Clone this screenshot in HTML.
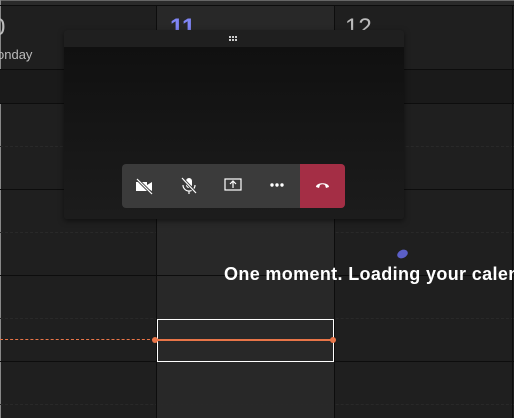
<!DOCTYPE html>
<html><head><style>
body{margin:0;width:514px;height:418px;overflow:hidden;background:#1f1f1f;font-family:"Liberation Sans",sans-serif;position:relative}
.a{position:absolute}
.h{position:absolute;left:0;width:514px;height:1px;background:#0d0d0d}
.d{position:absolute;left:0;width:514px;height:0;border-top:1px dashed #292929}
.v{position:absolute;top:5px;width:1px;height:413px;background:#0d0d0d}
</style></head><body>
<div class="a" style="left:0;top:0;width:514px;height:5px;background:#2a2a2a;border-top:1px solid #666;box-sizing:border-box"></div>
<div class="a" style="left:0;top:0;width:1px;height:418px;background:#888"></div>
<div class="a" style="left:157px;top:5px;width:177px;height:413px;background:#282828"></div>
<div class="a" style="left:0;top:70px;width:514px;height:33px;background:#1a1a1a"></div>
<div class="a" style="left:157px;top:70px;width:177px;height:33px;background:#1c1c1c"></div>
<div class="h" style="top:5px"></div>
<div class="h" style="top:69px"></div>
<div class="h" style="top:103px"></div>
<div class="d" style="top:146px"></div>
<div class="h" style="top:189px"></div>
<div class="d" style="top:232px"></div>
<div class="h" style="top:275px"></div>
<div class="d" style="top:318px"></div>
<div class="h" style="top:361px"></div>
<div class="d" style="top:404px"></div>
<div class="v" style="left:156px"></div>
<div class="v" style="left:334px"></div>
<div class="v" style="left:512px"></div>
<div class="a" style="left:0;top:14px;width:20px;overflow:hidden;height:40px"><div style="margin-left:-8px;font-size:24px;color:#bbb">0</div></div>
<div class="a" style="left:0;top:47px;width:60px;overflow:hidden"><div style="margin-left:-3px;font-size:13px;color:#bbb">onday</div></div>
<div class="a" style="left:170px;top:14px;font-size:24px;color:#7f85f5;font-weight:bold">11</div>
<div class="a" style="left:345px;top:14px;font-size:24px;color:#bbb">12</div>
<div class="a" style="left:395px;top:47px;font-size:13px;color:#bbb">y</div>
<div class="a" style="left:397px;top:250px;width:11px;height:8px;border-radius:50%;background:#5b5fc7;transform:rotate(-25deg)"></div>
<div class="a" style="left:224px;top:264px;width:290px;height:24px;overflow:hidden"><div style="font-size:18px;font-weight:bold;color:#fff;white-space:nowrap;letter-spacing:0.35px">One moment. Loading your calendar</div></div>
<div class="a" style="left:157px;top:319px;width:175px;height:41px;border:1px solid #fff"></div>
<div class="a" style="left:0;top:339px;width:155px;border-top:1px dashed #e97548"></div>
<div class="a" style="left:155px;top:339px;width:178px;height:2px;background:#e97548"></div>
<div class="a" style="left:152px;top:337px;width:6px;height:6px;border-radius:50%;background:#e97548"></div>
<div class="a" style="left:330px;top:337px;width:6px;height:6px;border-radius:50%;background:#e97548"></div>
<div class="a" style="left:64px;top:30px;width:340px;height:189px;background:linear-gradient(#0f0f0f,#1c1c1c);border-radius:3px;box-shadow:0 2px 6px rgba(0,0,0,.5);overflow:hidden">
 <div style="height:17px;background:#1f1f1f;position:relative">
  <svg style="position:absolute;left:165px;top:6px" width="9" height="6"><g fill="#ccc"><rect x="0" y="0" width="2" height="2"/><rect x="3" y="0" width="2" height="2"/><rect x="6" y="0" width="2" height="2"/><rect x="0" y="3" width="2" height="2"/><rect x="3" y="3" width="2" height="2"/><rect x="6" y="3" width="2" height="2"/></g></svg>
 </div>
 <div style="position:absolute;left:58px;top:134px;width:223px;height:44px;background:#3b3b3b;border-radius:4px;overflow:hidden">
  <svg class="a" style="left:13px;top:13px" width="20" height="18" viewBox="0 0 20 18"><path d="M1 5h11v9H1z M12 8l5-3v9l-5-3z" fill="#fff"/><path d="M2 2l15 15" stroke="#3b3b3b" stroke-width="3"/><path d="M2 2l15 15" stroke="#fff" stroke-width="1.2"/></svg>
  <svg class="a" style="left:58px;top:12px" width="18" height="20" viewBox="0 0 18 20"><rect x="6" y="2" width="6" height="10" rx="3" fill="#fff"/><path d="M3 9a6 6 0 0 0 12 0M9 15v3" stroke="#fff" fill="none" stroke-width="1.2"/><path d="M2 2l14 15" stroke="#3b3b3b" stroke-width="3"/><path d="M2 2l14 15" stroke="#fff" stroke-width="1.2"/></svg>
  <svg class="a" style="left:102px;top:14px" width="18" height="14" viewBox="0 0 18 14"><rect x="1" y="1" width="16" height="11" fill="none" stroke="#fff" stroke-width="1.2"/><path d="M9 10V4M6 6l3-3 3 3" stroke="#fff" fill="none" stroke-width="1.2"/></svg>
  <svg class="a" style="left:148px;top:19px" width="14" height="4"><circle cx="2" cy="2" r="1.7" fill="#fff"/><circle cx="7" cy="2" r="1.7" fill="#fff"/><circle cx="12" cy="2" r="1.7" fill="#fff"/></svg>
  <div class="a" style="left:178px;top:0;width:45px;height:44px;background:#a42e45">
   <svg class="a" style="left:15px;top:17px" width="15" height="8" viewBox="0 0 15 8"><path d="M1 6C1 1 14 1 14 6l-3 1-1-3c-2-1-3-1-5 0l-1 3z" fill="#fff"/></svg>
  </div>
 </div>
</div>
</body></html>
